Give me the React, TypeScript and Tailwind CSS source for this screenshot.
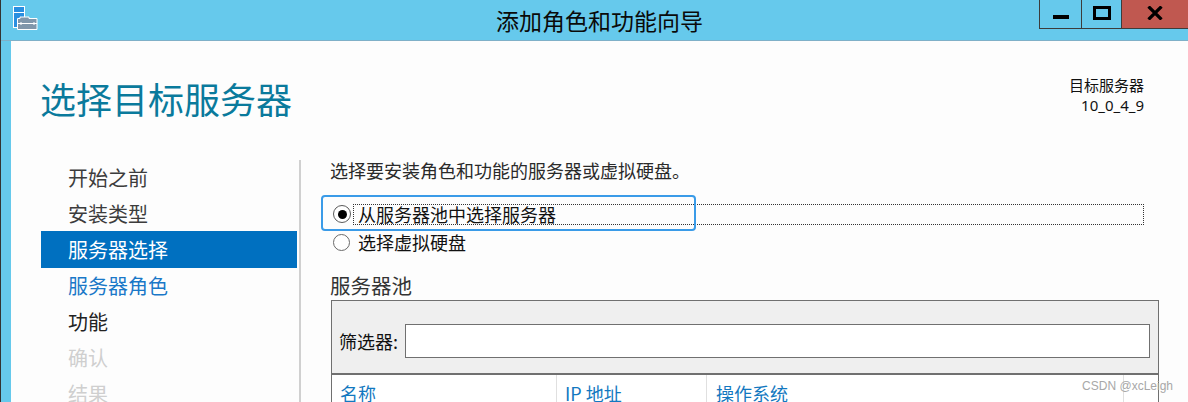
const steps = [
  { label: '开始之前', cls: 'h-[36px] leading-[36px] text-[#3c3c3c]' },
  { label: '安装类型', cls: 'h-[36px] leading-[36px] text-[#3c3c3c]' },
  { label: '服务器选择', cls: 'mt-[-1px] h-[37px] leading-[38px] bg-[#0070c0] text-white' },
  { label: '服务器角色', cls: 'h-[36px] leading-[36px] text-[#1a78c8]' },
  { label: '功能', cls: 'h-[36px] leading-[36px] text-[#222222]' },
  { label: '确认', cls: 'h-[36px] leading-[36px] text-[#cfcfcf]' },
  { label: '结果', cls: 'h-[36px] leading-[36px] text-[#cfcfcf]' },
];

function AppIcon() {
  return (
    <svg width="26" height="25" viewBox="0 0 26 25" className="block">
      <rect x="0.500" y="0.500" width="11" height="21" fill="#2a8fe0" stroke="#ffffff" />
      <rect x="1" y="6" width="10" height="1" fill="#ffffff" />
      <path d="M4.500 23.500v-11h2.500v-1.500h9v1.500h8v11z" fill="#8096aa" stroke="#ffffff" />
      <path d="M5 17.500h19M8 16v3M21 16v3" stroke="#ffffff" fill="none" />
    </svg>
  );
}

export default function App() {
  return (
    <div className="relative flex h-[402px] w-[1188px] flex-col overflow-hidden border-l border-l-[#333333] bg-[#66c9ec] font-['Microsoft_YaHei','Noto_Sans_CJK_SC',sans-serif]">
      {/* title bar */}
      <div className="relative flex h-[41px] shrink-0 items-start justify-between border-b border-b-[#7fb0c8]">
        <div className="ml-[12px] mt-[6px]">
          <AppIcon />
        </div>
        <div className="absolute left-[495px] top-0 text-[23px] leading-[40px] text-[#0a0a0a]">添加角色和功能向导</div>
        <div className="flex h-[29px] border-b border-l border-[#3c3c3c]">
          <div className="flex w-[42px] items-end justify-center border-r border-[#3c3c3c] pb-[9px]">
            <div className="h-[4px] w-[16px] bg-black" />
          </div>
          <div className="flex w-[40px] items-center justify-center border-r border-[#3c3c3c] pb-[2px]">
            <div className="h-[14px] w-[18px] border-[3px] border-black" />
          </div>
          <div className="flex w-[66px] items-center justify-center bg-[#c05850] pb-[2px]">
            <svg width="16" height="14" viewBox="0 0 16 14">
              <path d="M1.500 0.500L14.500 13.500M14.500 0.500L1.500 13.500" stroke="#000000" strokeWidth="3.200" fill="none" />
            </svg>
          </div>
        </div>
      </div>

      {/* white page */}
      <div className="ml-[10px] flex min-h-0 flex-1 flex-col bg-[#fdfdfd]">
        <div className="flex h-[118px] shrink-0 items-start justify-between pl-[29px] pr-[44px]">
          <div className="mt-[32px] text-[36px] leading-[50px] text-[#0a7a9c]">选择目标服务器</div>
          <div className="mt-[34px] text-right text-[15px] leading-[20px] text-[#111111]">
            <div>目标服务器</div>
            <div className="font-['Noto_Sans',sans-serif]">10_0_4_9</div>
          </div>
        </div>

        <div className="flex min-h-0 flex-1">
          {/* step list */}
          <div className="w-[290px] shrink-0 pl-[30px] pt-[1px]">
            <div className="flex h-[300px] w-[260px] flex-col border-r-[2px] border-r-[#d0d0d0]">
              {steps.map((s) => (
                <div key={s.label} className={`mr-[2px] shrink-0 pl-[27px] text-[20px] ${s.cls}`}>
                  {s.label}
                </div>
              ))}
            </div>
          </div>

          {/* right pane */}
          <div className="min-w-0 flex-1 pl-[29px] pr-[29px]">
            <div className="mt-[-1px] text-[18px] leading-[24px] text-[#2a2a2a]">选择要安装角色和功能的服务器或虚拟硬盘。</div>

            <div className="relative ml-[23px] mr-[15px] mt-[22px] h-[21px] border border-dotted border-[#333333]">
              <div className="absolute left-[-33px] top-[-10px] h-[36px] w-[375px] rounded-[4px] border-[2px] border-[#3a9be8]" />
              <div className="absolute left-[-21px] top-0 flex h-[18px] w-[18px] items-center justify-center rounded-full border border-[#5a5a5a] bg-white">
                <div className="h-[9px] w-[9px] rounded-full bg-black" />
              </div>
              <div className="absolute left-[4px] top-[-4px] whitespace-nowrap text-[18px] leading-[26px] text-[#111111]">从服务器池中选择服务器</div>
            </div>

            <div className="mt-[5px] flex items-center">
              <div className="ml-[3px] h-[17px] w-[17px] rounded-full border border-[#6a6a6a] bg-white" />
              <div className="ml-[8px] text-[18px] leading-[24px] text-[#111111]">选择虚拟硬盘</div>
            </div>

            <div className="mt-[17px] text-[20.500px] leading-[28px] text-[#333333]">服务器池</div>

            <div className="ml-[1px] mt-[1px] w-[828px] border-x border-t border-[#707070]">
              <div className="flex h-[74px] items-center border-b-[2px] border-b-[#707070] bg-[#efefef] pl-[7px] pr-[8px] pt-[8px]">
                <span className="text-[18px] text-[#111111]">筛选器:</span>
                <div className="ml-[7px] h-[34px] flex-1 border border-[#707070] bg-white" />
              </div>
              <div className="flex h-[40px] bg-white text-[18px] leading-[36px] text-[#1278c0]">
                <div className="w-[225px] border-r border-r-[#e0e0e0] pl-[8px]">名称</div>
                <div className="w-[150px] border-r border-r-[#e0e0e0] pl-[8px]">IP 地址</div>
                <div className="w-[417px] border-r border-r-[#e0e0e0] pl-[9px]">操作系统</div>
                <div className="flex-1" />
              </div>
            </div>
          </div>
        </div>
      </div>

      {/* watermark */}
      <div className="absolute right-[15px] top-[378px] font-['Liberation_Sans',sans-serif] text-[12px] leading-[16px] text-[#a8a8a8]">CSDN @xcLeigh</div>
    </div>
  );
}
